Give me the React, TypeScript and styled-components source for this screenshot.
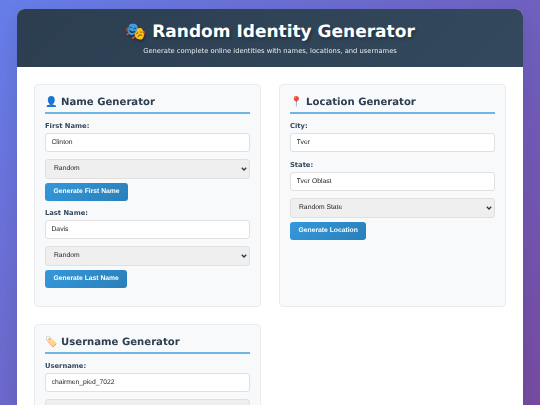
import React from "react";
import styled, { createGlobalStyle } from "styled-components";

const GlobalStyle = createGlobalStyle`
  html, body {
    margin: 0;
    padding: 0;
    height: 405px;
    overflow: hidden;
  }
  body {
    font-family: "DejaVu Sans", sans-serif;
    background: linear-gradient(135deg, #667eea 0%, #764ba2 100%);
    text-rendering: geometricPrecision;
  }
  input, select, button {
    text-rendering: geometricPrecision;
  }
`;

const chevron =
  "url(\"data:image/svg+xml,%3Csvg xmlns='http://www.w3.org/2000/svg' width='6' height='4'%3E%3Cpath d='M.8.8 3 3l2.2-2.2' fill='none' stroke='%23333' stroke-width='1.3'/%3E%3C/svg%3E\")";

const Page = styled.div`
  padding: 8.5px 17px 0;
  height: 405px;
  box-sizing: border-box;
  overflow: hidden;
  will-change: opacity;
`;

const Container = styled.div`
  background: #fff;
  border-radius: 7.5px 7.5px 0 0;
  box-shadow: 0 7px 22px rgba(0, 0, 0, 0.1);
  height: 500px;
  overflow: hidden;
`;

const Header = styled.header`
  background: linear-gradient(135deg, #2c3e50, #34495e);
  color: #fff;
  height: 58.5px;
  box-sizing: border-box;
  padding-top: 11px;
  text-align: center;
`;

const Title = styled.h1`
  margin: 0 0 2px;
  font-size: 17px;
  line-height: 24px;
  font-weight: 700;
  text-shadow: 1.5px 1.5px 3px rgba(0, 0, 0, 0.3);
`;

const Subtitle = styled.p`
  margin: 0;
  font-size: 6.75px;
  line-height: 10px;
  opacity: 0.9;
`;

const Grid = styled.main`
  display: grid;
  grid-template-columns: 227px 227px;
  gap: 17px 18px;
  padding: 17px;
`;

const Card = styled.section`
  background: #f8f9fa;
  border: 1px solid #e9ecef;
  border-radius: 4px;
  padding: 10px 10px 0;
  height: 223px;
  box-sizing: border-box;
`;

const CardTitle = styled.h2`
  margin: 0 0 6px;
  padding-bottom: 0.5px;
  font-size: 10.1px;
  line-height: 16px;
  font-weight: 700;
  color: #2c3e50;
  border-bottom: 2px solid #6fb5e3;
`;

const Label = styled.label`
  display: block;
  padding-top: 1px;
  margin-bottom: 1.5px;
  font-size: 6.75px;
  line-height: 10.5px;
  font-weight: 700;
  color: #34495e;
`;

const Input = styled.input`
  display: block;
  width: 100%;
  height: 19.5px;
  box-sizing: border-box;
  padding: 0 5.5px;
  margin-bottom: 6.5px;
  border: 1.5px solid #e0e0e0;
  border-radius: 3px;
  background: #fff;
  color: #222;
  font-family: "Liberation Sans", sans-serif;
  font-size: 6.75px;
`;

const Select = styled.select`
  display: block;
  width: 100%;
  height: 20px;
  box-sizing: border-box;
  padding: 0 8px;
  margin-bottom: 4px;
  border: 1.5px solid #e0e0e0;
  border-radius: 3px;
  appearance: none;
  background: #efefef ${chevron} no-repeat right 2.5px center;
  color: #222;
  font-family: "Liberation Sans", sans-serif;
  font-size: 6.75px;
`;

const Button = styled.button`
  display: block;
  height: 18px;
  box-sizing: border-box;
  padding: 0 8.5px;
  margin-bottom: 6px;
  border: 0;
  border-radius: 3px;
  background: linear-gradient(135deg, #3498db, #2980b9);
  color: #fff;
  font-family: "Liberation Sans", sans-serif;
  font-size: 6.75px;
  font-weight: 700;
`;

const Field = ({ label, value }: { label?: string; value: string }) => (
  <>
    {label && <Label>{label}</Label>}
    <Input defaultValue={value} />
  </>
);

const Picker = ({ value }: { value: string }) => (
  <Select defaultValue={value}>
    <option>{value}</option>
  </Select>
);

export default function App() {
  return (
    <>
      <GlobalStyle />
      <Page>
        <Container>
          <Header>
            <Title>🎭 Random Identity Generator</Title>
            <Subtitle>Generate complete online identities with names, locations, and usernames</Subtitle>
          </Header>
          <Grid>
            <Card>
              <CardTitle>👤 Name Generator</CardTitle>
              <Field label="First Name:" value="Clinton" />
              <Picker value="Random" />
              <Button>Generate First Name</Button>
              <Field label="Last Name:" value="Davis" />
              <Picker value="Random" />
              <Button>Generate Last Name</Button>
            </Card>
            <Card>
              <CardTitle>📍 Location Generator</CardTitle>
              <Field label="City:" value="Tver" />
              <Field label="State:" value="Tver Oblast" />
              <Picker value="Random State" />
              <Button>Generate Location</Button>
            </Card>
            <Card>
              <CardTitle>🏷️ Username Generator</CardTitle>
              <Field label="Username:" value="chairmen_pied_7022" />
              <Picker value="Random" />
            </Card>
          </Grid>
        </Container>
      </Page>
    </>
  );
}
